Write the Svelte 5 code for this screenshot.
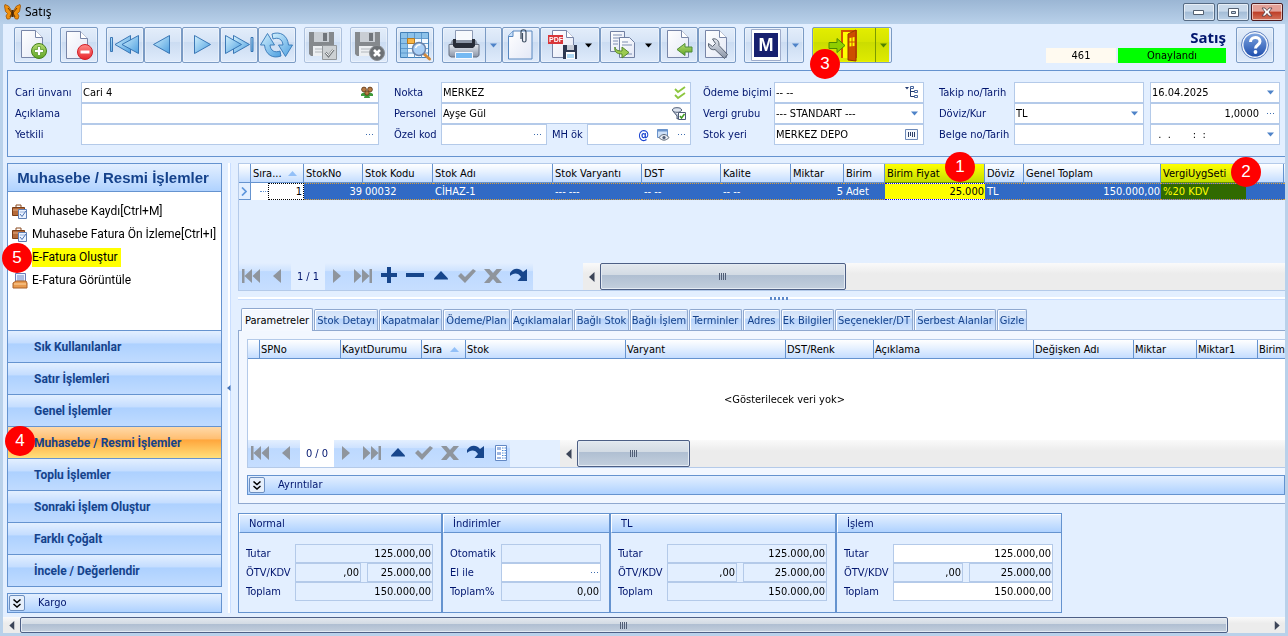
<script>
  const toolGroups = [
    [{ id: 'new', label: 'Yeni' }],
    [{ id: 'delete', label: 'Sil' }],
    [
      { id: 'first', label: 'İlk kayıt' },
      { id: 'prev', label: 'Önceki kayıt' },
      { id: 'next', label: 'Sonraki kayıt' },
      { id: 'last', label: 'Son kayıt' },
      { id: 'refresh', label: 'Yenile' }
    ],
    [{ id: 'save', label: 'Kaydet', off: true }],
    [{ id: 'cancel', label: 'Vazgeç', off: true }],
    [{ id: 'find', label: 'Listele' }],
    [
      { id: 'print', label: 'Yazdır', split: true, w: 60 },
      { id: 'attach', label: 'Ekler' },
      { id: 'pdf', label: 'PDF kaydet', w: 60 },
      { id: 'copy', label: 'Kopyala', w: 60 },
      { id: 'import', label: 'Aktar' },
      { id: 'tools', label: 'Araçlar' }
    ],
    [{ id: 'module', label: 'M', split: true, w: 60 }],
    [{ id: 'exit', label: 'Çıkış', split: true, w: 80, mark: '3' }]
  ];

  const sideLinks = [
    { text: 'Muhasebe Kaydı[Ctrl+M]', icon: 'case' },
    { text: 'Muhasebe Fatura Ön İzleme[Ctrl+I]', icon: 'case' },
    { text: 'E-Fatura Oluştur', icon: 'tray', hot: true },
    { text: 'E-Fatura Görüntüle', icon: 'tray' }
  ];
  const sections = [
    'Sık Kullanılanlar', 'Satır İşlemleri', 'Genel İşlemler', 'Muhasebe / Resmi İşlemler',
    'Toplu İşlemler', 'Sonraki İşlem Oluştur', 'Farklı Çoğalt', 'İncele / Değerlendir'
  ];

  const stockCols = [
    { t: 'Sıra...', w: 53, v: '1', sort: true, cls: 'seq' },
    { t: 'StokNo', w: 59, v: '39', cls: 'num' },
    { t: 'Stok Kodu', w: 70, v: '00032' },
    { t: 'Stok Adı', w: 120, v: 'CİHAZ-1' },
    { t: 'Stok Varyantı', w: 89, v: '--- ---' },
    { t: 'DST', w: 79, v: '-- --' },
    { t: 'Kalite', w: 70, v: '-- --' },
    { t: 'Miktar', w: 53, v: '5', cls: 'num' },
    { t: 'Birim', w: 41, v: 'Adet' },
    { t: 'Birim Fiyat', w: 100, v: '25.000', cls: 'num edit', hot: true, mark: '1' },
    { t: 'Döviz', w: 39, v: 'TL' },
    { t: 'Genel Toplam', w: 137, v: '150.000,00', cls: 'num' },
    { t: 'VergiUygSeti', w: 123, v: '%20 KDV', hot: true, mark: '2' }
  ];
  const paramCols = [
    ['SPNo', 81], ['KayıtDurumu', 81], ['Sıra', 44, true], ['Stok', 160], ['Varyant', 160], ['DST/Renk', 88],
    ['Açıklama', 160], ['Değişken Adı', 100], ['Miktar', 63], ['Miktar1', 61], ['Birim', 0]
  ];
  const tabs = [
    ['Stok Detayı', 64], ['Kapatmalar', 63], ['Ödeme/Plan', 67], ['Açıklamalar', 62], ['Bağlı Stok', 55],
    ['Bağlı İşlem', 58], ['Terminler', 53], ['Adres', 37], ['Ek Bilgiler', 53], ['Seçenekler/DT', 78],
    ['Serbest Alanlar', 82], ['Gizle', 30]
  ];
  const totals = [
    { t: 'Normal', w: 204, f: 138, v: 66 },
    { t: 'İndirimler', w: 168, f: 100, disc: true },
    { t: 'TL', w: 226, f: 160, v: 84 },
    { t: 'İşlem', w: 226, f: 160, v: 84, white: true }
  ];
  const nav1 = ['plus', 'minus', 'up', 'check', 'cross', 'redo'];
  const nav2 = ['up', 'check', 'cross', 'redo', 'cardview'];
</script>

{#snippet caret(dark)}
  <svg class="caret" width="7" height="5" viewBox="0 0 7 5"><path d="M0 0.5h7L3.5 4.5z" fill={dark ? '#000' : '#4f83c8'} /></svg>
{/snippet}

{#snippet dots()}
  <svg width="8" height="3" viewBox="0 0 8 3"><path d="M0 1h1v1H0zM3 1h1v1H3zM6 1h1v1H6z" fill="#3d6cae" /></svg>
{/snippet}

{#snippet page(x, y)}
  <path d="M{x} {y}h14l7 7v20h-21z" fill="url(#paper)" stroke="#7886a8" />
  <path d="M{x + 14} {y}v7h7" fill="#fff" stroke="#7886a8" />
{/snippet}

{#snippet toolIcon(id)}
  {#if id === 'new'}
    {@render page(7.5, 3.5)}
    <circle cx="25" cy="24" r="7.5" fill="url(#green)" stroke="#44801a" />
    <path d="M23.5 19.5h3v3h3v3h-3v3h-3v-3h-3v-3h3z" fill="#fff" stroke="#5a9a2b" stroke-width=".8" />
  {:else if id === 'delete'}
    {@render page(6.5, 4.5)}
    <circle cx="25" cy="25" r="7.5" fill="url(#red)" stroke="#d11f27" />
    <path d="M20.5 23.5h9v3h-9z" fill="#fff" />
  {:else if id === 'first'}
    <g fill="url(#sky)" stroke="#2c6cae" stroke-width=".9"><path d="M4.5 10.5h2v14h-2z" /><path d="M24.5 8.500v18L9 17.500z" /><path d="M32.500 8.500v18L16 17.500z" /></g>
  {:else if id === 'prev'}
    <path d="M25.500 8.500v18L9.500 17.500z" fill="url(#sky)" stroke="#2c6cae" stroke-width=".9" />
  {:else if id === 'next'}
    <path d="M12.500 8.500v18l16-9z" fill="url(#sky)" stroke="#2c6cae" stroke-width=".9" />
  {:else if id === 'last'}
    <g fill="url(#sky)" stroke="#2c6cae" stroke-width=".9"><path d="M31 10.500h2v14h-2z" /><path d="M13.500 8.500v18l16-9z" /><path d="M5.500 8.500v18l16-9z" /></g>
  {:else if id === 'refresh'}
    <g fill="url(#sky)" stroke="#3476b6" stroke-width=".9" stroke-linejoin="round">
      <path d="M14 7c8-3 15.500 1 16.500 11h4l-7 11.500-7-11.500h4.500c-.5-6-5-8-10-6z" />
      <path d="M23 29c-8 3-15.500-1-16.500-11h-4l7-11.500 7 11.500H12c.5 6 5 8 10 6z" />
    </g>
  {:else if id === 'save' || id === 'cancel'}
    <path d="M5 5h25v24H7l-2-2z" fill="#85898d" />
    <path d="M10 5h15v10H10z" fill="#c9ced4" /><path d="M19 6h4v8h-4z" fill="#70757b" />
    <path d="M9 19h16v10H9z" fill="#eceff2" /><path d="M11 22h12M11 25h12" stroke="#b2b7bc" />
    {#if id === 'save'}
      <path d="M18.500 18.500h14v14h-14z" fill="#cdd1d4" stroke="#93979b" />
      <path d="M21.500 25.500l3 3.500 5-6.500" fill="none" stroke="#777c80" stroke-width="2.400" /><path d="M21.500 25.500l3 3 5-6.500" fill="none" stroke="#f7f7f7" />
    {:else}
      <circle cx="27" cy="26" r="7.500" fill="#6d7175" stroke="#8c9094" /><path d="M24 23l6 6M30 23l-6 6" stroke="#fff" stroke-width="2.600" />
    {/if}
  {:else if id === 'find'}
    <path d="M4.500 5.500h28v25h-28z" fill="#f3f9ff" stroke="#4380b8" />
    <path d="M5 6h27v5H5zM5 11h6v19H5z" fill="#8cc2ea" />
    <path d="M11.500 6v25M18.500 6v25M25.500 6v25M5 11.500h27M5 16.500h27M5 21.500h27M5 26h27" stroke="#5893c8" stroke-width=".9" />
    <path d="M11.500 11.500h7v5h-7z" fill="#f9b646" stroke="#b57a20" />
    <path d="M28 27l5.500 5" stroke="#d28a3b" stroke-width="3" stroke-linecap="round" />
    <circle cx="23" cy="22" r="6.500" fill="#a9cff6" stroke="#6a82a8" stroke-width="1.500" /><path d="M19.500 21c1-3 4-3.500 5-3" stroke="#fff" stroke-width="1.500" fill="none" />
  {:else if id === 'print'}
    <path d="M13.500 3.500h17v13h-17z" fill="#f7f9fd" stroke="#8c9ab5" />
    <path d="M10 13h24l3 7H7z" fill="#8b95a6" />
    <path d="M7 17.500h30v11l-2 1.500H9l-2-1.500z" fill="url(#grey)" stroke="#646e80" />
    <path d="M11 12h3v4h16v-4h3v7l-2 2H13l-2-2z" fill="#272c38" />
    <path d="M13.500 25.500h17v6h-17z" fill="#74b9f3" stroke="#f6f9ff" />
  {:else if id === 'attach'}
    <path d="M11 4h19v28H6.500V9z" fill="url(#paper)" stroke="#5888c0" /><path d="M6.500 9.500H11V4" fill="#c5dffb" stroke="#5888c0" />
    <path d="M20.500 6v7.500c0 2 3.500 2 3.500 0V5c0-3-5-3-5 0v7" fill="none" stroke="#3e4f63" stroke-width="1.200" />
  {:else if id === 'pdf'}
    {@render page(12.500, 3.500)}
    <path d="M8 8h15v9H8z" fill="#d8363a" /><text x="9" y="15" class="pdf">PDF</text>
    <path d="M23 18h14v14H23z" fill="#2d3952" /><path d="M27 18h7v5h-7z" fill="#c6ccd8" /><path d="M26 25h9v7h-9z" fill="#fff" /><path d="M27 28h7M27 30h7" stroke="#5cb0e8" />
  {:else if id === 'copy'}
    <path d="M10.500 4.500h14v20h-14z" fill="url(#paper)" stroke="#7180a2" /><path d="M13 8h9M13 11h9M13 14h5M13 17h5" stroke="#7f8fb2" />
    <path d="M19.500 10.500h10l5 5v15h-15z" fill="url(#paper)" stroke="#7180a2" /><path d="M22 15h6M22 18h10M22 27h10" stroke="#7f8fb2" />
    <path d="M15 20c0 3 3 4 7 4v-4l7 5.500-7 5.500v-4c-5 0-8-2-7-7z" fill="#9ccb50" stroke="#55872b" />
  {:else if id === 'import'}
    {@render page(7.500, 3.500)}
    <path d="M17 22.500l8-6v3.500h7v5h-7v3.500z" fill="url(#green)" stroke="#4f8d36" />
  {:else if id === 'tools'}
    {@render page(7.500, 3.500)}
    <path d="M14.500 12c4-1 7 2 6.500 6.500l8.500 9-3 4-9.500-9c-4 1-7-2-6.500-6l4 3 3-3z" fill="url(#grey)" stroke="#56606f" />
  {:else if id === 'module'}
    <path d="M7.500 2.500h29v31h-29z" fill="#fff" stroke="#9eaccb" /><path d="M10 6h24v24H10z" fill="#17206f" />
  {:else if id === 'exit'}
    <path d="M30 31V4h14v27" fill="#fff" stroke="#d2551e" stroke-width="2" />
    <path d="M36 7l8-4v31l-8-1z" fill="#cd4d16" stroke="#963609" />
    <path d="M37.500 11l5-1v9l-5 .5z" fill="#fff" /><path d="M40 10v10M37 15h6" stroke="#cd4d16" />
    <path d="M17 15.500h8v-4l8 7-8 7v-4h-8z" fill="#8fce4a" stroke="#4c8a28" />
  {/if}
{/snippet}

{#snippet navIcon(id)}
  <svg width="22" height="22" viewBox="0 0 22 22">
    {#if id === 'first'}<path d="M2 4h2.500v14H2zM12 4v14L4.500 11zM20 4v14l-7.500-7z" fill="#8f959d" />
    {:else if id === 'prev'}<path d="M15 4v14L7 11z" fill="#8f959d" />
    {:else if id === 'next'}<path d="M7 4v14l8-7z" fill="#8f959d" />
    {:else if id === 'last'}<path d="M17.500 4H20v14h-2.500zM10 4v14l7.500-7zM2 4v14l7.500-7z" fill="#8f959d" />
    {:else if id === 'plus'}<path d="M9 2h4v6h6v4h-6v6H9v-6H3V8h6z" fill="#17468c" />
    {:else if id === 'minus'}<path d="M2 8h18v4H2z" fill="#17468c" />
    {:else if id === 'up'}<path d="M4 13.500v1h14v-1L11 6z" fill="#17468c" />
    {:else if id === 'check'}<path d="M2 11l3-3 4 4 8-8 3 2L9 18z" fill="#8f959d" />
    {:else if id === 'cross'}<path d="M2 4h5.500L11 8l3.500-4H20l-6 7 6 7h-5.500L11 14l-3.500 4H2l6-7z" fill="#8f959d" />
    {:else if id === 'redo'}<path d="M2 11V8c3-5 9-6 13-1l4-3v12H9.500l3.500-4C10 7 5 8 2 11z" fill="#17468c" />
    {:else}<path d="M5.500 3.500h11v15h-11z" fill="#fff" stroke="#6288c4" /><path d="M7 5h4v3H7zM7 10h4v3H7zM7 15h4v2H7z" fill="#9eb7e2" /><path d="M12 6h4M12 8.500h4M12 11h4M12 13.500h4M12 16h4" stroke="#4d8ad8" stroke-dasharray="1.500 1" />{/if}
  </svg>
{/snippet}

{#snippet navigator(count, extra, gapClass, thumb)}
  <div class="nav {gapClass}">
    <div class="navbtns">
      <button aria-label="İlk">{@render navIcon('first')}</button>
      <button aria-label="Önceki">{@render navIcon('prev')}</button>
      <span class="count">{count}</span>
      <button aria-label="Sonraki">{@render navIcon('next')}</button>
      <button aria-label="Son">{@render navIcon('last')}</button>
      {#each extra as e}<button aria-label={e} class:slim={e === 'cardview'}>{@render navIcon(e)}</button>{/each}
    </div>
    <div class="hbar">
      <button class="arr" aria-label="Sola kaydır"><svg width="6" height="10" viewBox="0 0 6 10"><path d="M5.500 0v10L0 5z" fill="#3c4558" /></svg></button>
      <div class="thumb" style:width="{thumb}px"><i class="grip"></i></div>
    </div>
  </div>
{/snippet}

{#snippet sortMark()}
  <svg class="sort" width="9" height="5" viewBox="0 0 9 5"><path d="M0 5h9L4.500 0z" fill="#93c0f8" /></svg>
{/snippet}

{#snippet chevrons()}
  <button class="chev" aria-label="Genişlet"><svg width="8" height="9" viewBox="0 0 8 9"><path d="M.5 0.500L4 3.500l3.500-3M.5 5L4 8l3.500-3" fill="none" stroke="#000" stroke-width="1.500" /></svg></button>
{/snippet}

<svg class="defs" width="0" height="0" aria-hidden="true">
  <defs>
    <linearGradient id="paper" x1="0" y1="0" x2="1" y2="1"><stop offset="0" stop-color="#fff" /><stop offset="1" stop-color="#e3e8f6" /></linearGradient>
    <linearGradient id="sky" x1="0" y1="0" x2="1" y2="1"><stop offset="0" stop-color="#d2f0fd" /><stop offset="1" stop-color="#4d9fe0" /></linearGradient>
    <linearGradient id="green" x1="0" y1="0" x2="0" y2="1"><stop offset="0" stop-color="#b7dc73" /><stop offset="1" stop-color="#5fa523" /></linearGradient>
    <linearGradient id="red" x1="0" y1="0" x2="0" y2="1"><stop offset="0" stop-color="#ff8a88" /><stop offset="1" stop-color="#e8262c" /></linearGradient>
    <linearGradient id="grey" x1="0" y1="0" x2="0" y2="1"><stop offset="0" stop-color="#e4e8ef" /><stop offset="1" stop-color="#8893a6" /></linearGradient>
    <linearGradient id="help" x1="0" y1="0" x2="0" y2="1"><stop offset="0" stop-color="#7fa5e0" /><stop offset="1" stop-color="#1f4fae" /></linearGradient>
  </defs>
</svg>

<div class="window">
  <header class="titlebar">
    <svg width="17" height="16" viewBox="0 0 17 16">
      <path d="M8 7.500L4.500 2 1 .5 .5 2l1 5.500 2 2L2 12l1 3h2.500L8 11zM9 7.500L12.500 2 16 .5l.5 1.500-1 5.500-2 2L15 12l-1 3h-2.500L9 11z" fill="#f0900c" stroke="#9a560c" stroke-width=".8" />
      <path d="M4 4l4 5-2 4M13 4L9 9l2 4" fill="none" stroke="#5a2e08" stroke-width=".9" /><path d="M7.500 6h2v7h-2z" fill="#4a2a08" />
    </svg>
    <span>Satış</span>
    <div class="winbtns">
      <button aria-label="Simge durumu"><svg width="12" height="5" viewBox="0 0 12 5"><path d="M.5.500h10v4H.5z" fill="#fff" stroke="#535f70" /></svg></button>
      <button aria-label="Önceki boyut"><svg width="11" height="9" viewBox="0 0 11 9"><path d="M.5.500h10v8H.5z" fill="#fff" stroke="#535f70" /><path d="M3.500 3.500h4v2h-4z" fill="#c2d3e6" stroke="#535f70" /></svg></button>
      <button class="close" aria-label="Kapat"><svg width="12" height="10" viewBox="0 0 12 10"><path d="M1 1h3l2 2.500L8 1h3L8 5l3 4H8L6 6.500 4 9H1l3-4z" fill="#fff" stroke="#503a40" stroke-width=".8" /></svg></button>
    </div>
  </header>

  <div class="client">
    <div class="toolbar">
      {#each toolGroups as group}
        <div class="tgroup">
          {#each group as b}
            <div class="tool" class:off={b.off} class:lit={b.id === 'exit'} style:width="{b.w ?? 38}px">
              <button class="face" aria-label={b.label} disabled={b.off}>
                <svg width="100%" height="34"><svg x="-1" y="-1" overflow="visible">{@render toolIcon(b.id)}</svg></svg>
                {#if b.id === 'module'}<b class="em">M</b>{/if}
                {#if b.id === 'pdf' || b.id === 'copy'}<span class="drop">{@render caret(true)}</span>{/if}
              </button>
              {#if b.split}<button class="more" aria-label="{b.label} seçenekleri">{@render caret(false)}</button>{/if}
              {#if b.mark}<i class="mark m3">{b.mark}</i>{/if}
            </div>
          {/each}
        </div>
      {/each}
      <div class="status">
        <h1>Satış</h1>
        <div class="chips"><span class="no">461</span><span class="ok">Onaylandı</span></div>
      </div>
      <div class="tool"><button class="face" aria-label="Yardım">
        <svg width="36" height="34" viewBox="0 0 36 34"><circle cx="18" cy="17" r="13.500" fill="#f4f7fd" stroke="#5b7fc0" /><circle cx="18" cy="17" r="11.500" fill="url(#help)" /><path d="M13.500 14c0-6 9.500-6 9.500-.5 0 3.500-4.500 3.500-4.500 7" fill="none" stroke="#fff" stroke-width="3" /><circle cx="18.500" cy="24" r="1.900" fill="#fff" /></svg>
      </button></div>
    </div>

    <form class="form">
      <label for="cari">Cari ünvanı</label>
      <div class="box"><input id="cari" value="Cari 4" />
        <svg width="14" height="13" viewBox="0 0 14 13"><path d="M1 8c2-2 4-2 6 0 2-2 4-2 6 0v2H1zM4 12c0-4 6-4 6 0z" fill="#3e9a3a" /><g fill="#b57a44" stroke="#5b3413" stroke-width=".8"><circle cx="4" cy="3.500" r="2.400" /><circle cx="10" cy="3.500" r="2.400" /><circle cx="7" cy="7" r="2.200" /></g></svg></div>
      <label for="nokta">Nokta</label>
      <div class="box"><input id="nokta" value="MERKEZ" />
        <svg width="12" height="14" viewBox="0 0 12 14"><path d="M1 3l3 3 7-5M1 9l3 3 7-5" fill="none" stroke="#8dc63f" stroke-width="1.800" /></svg></div>
      <label for="odeme">Ödeme biçimi</label>
      <div class="box"><input id="odeme" value="-- --" />
        <svg width="14" height="13" viewBox="0 0 14 13"><path d="M0 1h4L2 3.500z" fill="#223a70" /><path d="M5.500 2v8.500H9M5.500 5.500H9" fill="none" stroke="#223a70" /><path d="M5.500.500h3v2h-3zM9.500 4.500h3v2h-3zM9.500 9.500h3v2h-3z" fill="#fff" stroke="#47659c" /></svg></div>
      <label for="takip">Takip no/Tarih</label>
      <div class="box"><input id="takip" /></div>
      <div class="box last"><input aria-label="Tarih" value="16.04.2025" />{@render caret(false)}</div>

      <label for="aciklama">Açıklama</label>
      <div class="box"><input id="aciklama" /></div>
      <label for="personel">Personel</label>
      <div class="box"><input id="personel" value="Ayşe Gül" />
        <svg width="14" height="13" viewBox="0 0 14 13"><ellipse cx="5" cy="3" rx="4.500" ry="2.300" fill="#dfe5ef" stroke="#4c5a74" /><path d="M1 4l4 5v3l2-1V8" fill="#b9c3d4" stroke="#4c5a74" /><path d="M6.500 5.500h7v7h-7z" fill="#fff" stroke="#4c5a74" /><path d="M8 9l1.500 2 3-4" fill="none" stroke="#3f9b1c" stroke-width="1.500" /></svg></div>
      <label for="vergi">Vergi grubu</label>
      <div class="box"><select id="vergi"><option>--- STANDART ---</option></select>{@render caret(false)}</div>
      <label for="doviz">Döviz/Kur</label>
      <div class="box"><select id="doviz"><option>TL</option></select>{@render caret(false)}</div>
      <div class="box last num"><input aria-label="Kur" value="1,0000" />{@render dots()}</div>

      <label for="yetkili">Yetkili</label>
      <div class="box"><input id="yetkili" />{@render dots()}</div>
      <label for="ozel">Özel kod</label>
      <div class="pair">
        <div class="box"><input id="ozel" />{@render dots()}</div>
        <label for="mh">MH ök</label>
        <div class="box"><input id="mh" /><b class="at">@</b>
          <svg width="13" height="12" viewBox="0 0 13 12"><path d="M.5.500h10v8H.5z" fill="#cfe1f8" stroke="#6b94cc" /><path d="M.5.500h10v2H.5z" fill="#6b94cc" /><path d="M2 8.500c3-4 7-4 10 0-3 3.500-7 3.500-10 0z" fill="#e7ebf2" stroke="#5b6675" /><circle cx="7" cy="8.500" r="1.600" fill="#4c5a74" /></svg>
          {@render dots()}</div>
      </div>
      <label for="yer">Stok yeri</label>
      <div class="box"><input id="yer" value="MERKEZ DEPO" />
        <svg width="14" height="12" viewBox="0 0 14 12"><path d="M.5.500h12v10H.5z" fill="#f5f8fd" stroke="#6d89b8" /><path d="M3.500 3v5M5.500 3v4M7.500 3v5M9.500 3v5" stroke="#2c3e66" /></svg></div>
      <label for="belge">Belge no/Tarih</label>
      <div class="box"><input id="belge" /></div>
      <div class="box last"><input aria-label="Belge tarihi" value="  .  .       :  :" />{@render caret(false)}</div>
    </form>

    <div class="work">
      <aside>
        <div class="panel">
          <h2>Muhasebe / Resmi İşlemler</h2>
          <ul>
            {#each sideLinks as l}
              <li>
                <svg width="16" height="16" viewBox="0 0 16 16">
                  {#if l.icon === 'case'}
                    <path d="M4 3V1h5v2" fill="none" stroke="#8a4a20" /><path d="M.5 3.500h12v8H.5z" fill="#b56a3a" stroke="#7a3e18" /><path d="M1 6h11" stroke="#e6b088" />
                    <path d="M6.500 5.500h8v9h-8z" fill="#eaf2ff" stroke="#5f7fb4" /><path d="M8 8h5" stroke="#9bb4de" /><path d="M8 10l2 2.500L14 7" fill="none" stroke="#4b73b4" />
                  {:else}
                    <path d="M3.500.500h10v9h-10z" fill="#eef3ff" stroke="#6a7cb8" /><path d="M5 3h7M5 5h7M5 7h7" stroke="#6a86c8" />
                    <path d="M1 10l3-2h10l1 2v5H1z" fill="#e79a4e" stroke="#a8602a" /><path d="M2 11h12" stroke="#ffd6a4" />
                  {/if}
                </svg>
                <a href="#islem" class:hot={l.hot}>{l.text}</a>
                {#if l.hot}<i class="mark m5">5</i>{/if}
              </li>
            {/each}
          </ul>
          {#each sections as s, i}
            <button class="section" class:active={i === 3}>{s}{#if i === 3}<i class="mark m4">4</i>{/if}</button>
          {/each}
        </div>
        <div class="fold">{@render chevrons()}<span>Kargo</span></div>
      </aside>

      <div class="vsplit"><svg width="4" height="6" viewBox="0 0 4 6"><path d="M3.500 0v6L0 3z" fill="#4373b8" /></svg></div>

      <main>
        <section class="grid stock">
          <table>
            <colgroup><col style:width="12px" />{#each stockCols as c}<col style:width="{c.w}px" />{/each}<col /></colgroup>
            <thead><tr><th></th>
              {#each stockCols as c}<th class:lit={c.hot} class:part={c.mark === '2'}>{c.t}{#if c.sort}{@render sortMark()}{/if}{#if c.mark}<i class="mark m{c.mark}">{c.mark}</i>{/if}</th>{/each}
              <th></th></tr></thead>
            <tbody><tr><td class="ind"><svg width="6" height="9" viewBox="0 0 6 9"><path d="M1 .5l4 4-4 4" fill="none" stroke="#5e96dc" stroke-width="1.700" /></svg></td>
              {#each stockCols as c}<td class={c.cls} class:lit={c.hot} class:part={c.mark === '2'}>{#if c.sort}<span class="row"><i class="twig"></i><span class="one">{c.v}</span></span>{:else}{c.v}{/if}</td>{/each}
              <td></td></tr></tbody>
          </table>
          {@render navigator('1 / 1', nav1, 'wide', 246)}
        </section>

        <div class="hsplit"><i></i></div>

        <div class="tabs" role="tablist">
          <button role="tab" aria-selected="true" class="on">Parametreler</button>
          {#each tabs as [t, w]}<button role="tab" aria-selected="false" style:width="{w}px">{t}</button>{/each}
        </div>
        <div class="tabpage">
          <section class="grid params">
            <table>
              <colgroup><col style:width="12px" />{#each paramCols as c}{#if c[1]}<col style:width="{c[1]}px" />{:else}<col />{/if}{/each}</colgroup>
              <thead><tr><th></th>{#each paramCols as c}<th>{c[0]}{#if c[2]}{@render sortMark()}{/if}</th>{/each}</tr></thead>
            </table>
            <p>&lt;Gösterilecek veri yok&gt;</p>
            {@render navigator('0 / 0', nav2, 'white', 113)}
          </section>
          <div class="fold">{@render chevrons()}<span>Ayrıntılar</span></div>
        </div>

        <div class="totals">
          {#each totals as g, i}
            <fieldset style:width="{g.w}px">
              <h3>{g.t}</h3>
              <div class="lines" style="--f: {g.f}px; --v: {g.v ?? 0}px">
                {#if g.disc}
                  <label for="ot">Otomatik</label><div class="sum"><input id="ot" readonly /></div>
                  <label for="el">El ile</label><div class="sum white"><input id="el" />{@render dots()}</div>
                  <label for="tp">Toplam%</label><div class="sum"><input id="tp" value="0,00" readonly /></div>
                {:else}
                  <label for="tu{i}">Tutar</label><div class="sum" class:white={g.white}><input id="tu{i}" value="125.000,00" /></div>
                  <label for="ov{i}">ÖTV/KDV</label><div class="two"><div class="sum"><input id="ov{i}" value=",00" readonly /></div><div class="sum"><input aria-label="KDV" value="25.000,00" readonly /></div></div>
                  <label for="to{i}">Toplam</label><div class="sum" class:white={g.white}><input id="to{i}" value="150.000,00" /></div>
                {/if}
              </div>
            </fieldset>
          {/each}
        </div>
      </main>
    </div>

    <div class="hbar page">
      <button class="arr" aria-label="Sola"><svg width="6" height="9" viewBox="0 0 6 10"><path d="M5.500 0v10L0 5z" fill="#3c4558" /></svg></button>
      <div class="thumb"><i class="grip"></i></div>
      <button class="arr" aria-label="Sağa"><svg width="6" height="9" viewBox="0 0 6 10"><path d="M.5 0v10L6 5z" fill="#3c4558" /></svg></button>
    </div>
  </div>
</div>

<style>
  :global(body) { background: #b9d1ea; }
  * { box-sizing: border-box; }
  button, input, select { font: inherit; color: inherit; margin: 0; padding: 0; border: 0; background: none; border-radius: 0; outline: 0; }
  h1, h2, h3, ul, p, fieldset { margin: 0; padding: 0; border: 0; list-style: none; }
  a { color: inherit; text-decoration: none; }
  i { font-style: normal; }
  svg { display: block; flex: none; }
  .defs { position: absolute; }

  .window { min-height: 100vh; display: flex; flex-direction: column; padding: 0 3px 3px; overflow: hidden; background: #b9d1ea; font: 11px/14px "DejaVu Sans Condensed", "Noto Sans", sans-serif; color: #000; }
  .titlebar { display: flex; align-items: center; gap: 4px; height: 24px; margin: 0 -3px; padding: 0 5px 0 4px; background: linear-gradient(#9bb6d4, #b9d1ea); font: 12px/16px "Noto Sans", sans-serif; }
  .winbtns { display: flex; gap: 2px; margin-left: auto; }
  .winbtns button { width: 32px; height: 18px; display: grid; place-items: center; border: 1px solid #566b84; border-radius: 2px; box-shadow: inset 0 0 0 1px #ffffff90; background: linear-gradient(#c9d9ea 45%, #a3bcd6 50%, #bdd2e8); }
  .winbtns .close { border-color: #4d1a1e; background: linear-gradient(#e3a198 45%, #bd3d26 50%, #d4735c); }
  .client { flex: 1; display: flex; flex-direction: column; background: #e3efff; min-width: 0; }

  .toolbar { display: flex; gap: 8px; padding: 3px 11px 7px; height: 46px; }
  .tgroup { display: flex; }
  .tool { position: relative; display: flex; height: 36px; width: 38px; border: 1px solid #7b9bc4; border-radius: 2px; background: linear-gradient(#e3edfa, #d6e4f6 40%, #cbdcf2 42%, #dfebfb); box-shadow: inset 0 0 0 1px #ffffff60; }
  .tool.off { border-color: #adc1dd; }
  .face { flex: 1; position: relative; overflow: hidden; min-width: 0; }
  .more { width: 16px; display: grid; place-items: center; border-left: 1px solid #7b9bc4; }
  .drop { position: absolute; right: 7px; top: 15px; }
  .em { position: absolute; left: 9px; top: 5px; width: 24px; line-height: 24px; color: #fff; font-family: "Liberation Sans", sans-serif; font-size: 18px; text-align: center; }
  .pdf { font: bold 7px "Liberation Sans", sans-serif; fill: #fff; }
  .tool.lit::after { content: ""; position: absolute; inset: 0 2px 0 0; background: #ff0; mix-blend-mode: multiply; pointer-events: none; }
  .mark { position: absolute; z-index: 2; width: 30px; height: 30px; border-radius: 50%; background: #f00; color: #fff; font: 17px/30px "Liberation Sans", sans-serif; text-align: center; }
  .m3 { left: -3px; top: 21px; }
  .status { margin: 0 2px 0 auto; width: 180px; }
  .status h1 { height: 21px; font: bold 15px/20px "Noto Sans", sans-serif; color: #00156e; text-align: right; }
  .chips { display: flex; gap: 2px; text-align: center; line-height: 15px; }
  .no { flex: 0 0 70px; background: #fffaf0; }
  .ok { flex: 1; background: #0f0; }

  .form { display: grid; grid-template-columns: 66px 298fr 62px 250fr 83px 150fr 90px 130fr 136fr; grid-auto-rows: 21px; margin-left: 4px; padding: 11px 5px 11px 7px; border: 1px solid #6593cf; border-right: 0; color: #00156e; }
  .form label { line-height: 21px; padding-left: 15px; white-space: nowrap; }
  .form > label:nth-of-type(4n + 1) { padding-left: 0; }
  .form > label:nth-of-type(4n + 3) { padding-left: 12px; }
  .box { display: flex; align-items: center; min-width: 0; gap: 8px; padding: 0 4px 0 0; border: 1px solid #b4cae9; background: #fff; color: #000; }
  .box input, .box select { flex: 1; min-width: 0; width: 0; height: 18px; padding-left: 1px; appearance: none; white-space: pre; }
  .box.last { margin-left: 6px; }
  .box .caret { margin-right: 1px; }
  .num input { text-align: right; }
  .form > .pair { display: flex; }
  .pair .box:first-child { flex: 106; }
  .pair label { flex: 0 0 40px; padding-left: 5px; }
  .pair .box:last-child { flex: 104; }
  .at { color: #1a43d0; font-size: 12px; }

  .work { flex: 1; display: flex; padding: 6px 0 4px 4px; min-width: 0; }
  aside { flex: 0 0 215px; min-width: 0; display: flex; flex-direction: column; gap: 6px; }
  .panel { flex: 1; display: flex; flex-direction: column; border: 1px solid #6593cf; background: #fff; }
  h2 { height: 28px; padding-right: 3px; border-bottom: 1px solid #6593cf; background: linear-gradient(#e3efff, #afd2ff); color: #15428b; font: bold 15px/27px "Liberation Sans", sans-serif; text-align: center; }
  .panel ul { flex: 1; padding-top: 8px; font: 12px/17px Roboto, sans-serif; }
  li { position: relative; display: flex; align-items: center; gap: 4px; height: 23px; padding-left: 4px; white-space: nowrap; }
  li a { height: 19px; line-height: 18px; padding-right: 3px; }
  li a.hot { background: #ff0; }
  .m5 { left: -6px; top: -3px; }
  .m4 { left: -3px; top: -1px; }
  .section { position: relative; height: 32px; padding-left: 26px; text-align: left; border-top: 1px solid #6593cf; background: linear-gradient(#e3efff, #c4ddff 38%, #add1ff 42%, #c0dbff); color: #15428b; font: bold 12px/30px Roboto, sans-serif; }
  .section.active { background: linear-gradient(#ffd9a8, #ffbf73 38%, #ffa63c 42%, #ffe07c); }
  .fold { display: flex; align-items: center; height: 20px; padding-left: 1px; gap: 13px; border: 1px solid #6593cf; background: linear-gradient(#e3efff, #afd2ff); color: #00156e; }
  .chev { width: 16px; height: 16px; display: grid; place-items: center; border: 1px solid #6d8fbf; border-radius: 2px; background: #e6effb; }

  .vsplit { flex: 0 0 16px; display: flex; align-items: center; padding-left: 5px; background: linear-gradient(90deg, #0000 6px, #fff 6px 8px, #c9deff 8px 9px, #0000 9px); }
  main { flex: 1; min-width: 0; display: flex; flex-direction: column; }
  .grid { display: flex; flex-direction: column; border: 1px solid #b4cae9; border-right: 0; min-width: 0; }
  .stock { min-height: 128px; }
  table { width: 100%; table-layout: fixed; border-collapse: separate; border-spacing: 0; }
  th { position: relative; height: 19px; padding: 1px 2px 0; text-align: left; font-weight: normal; white-space: nowrap; background: linear-gradient(#fff, #e3efff 50%, #c4ddff); border-right: 1px solid #6593cf; border-bottom: 1px solid #6593cf; }
  th:last-child { border-right: 0; overflow: hidden; }
  .sort { position: absolute; right: 6px; top: 7px; }
  td { position: relative; height: 17px; padding: 0 2px; color: #fff; background: #316ac5; white-space: nowrap; line-height: 15px; border-top: 1px dotted #d8a040; border-bottom: 1px dotted #d8a040; }
  td.num { text-align: right; padding-right: 1px; }
  td.ind { background: #e3efff; border: solid #6593cf; border-width: 0 1px 1px 0; }
  td.seq { padding: 0; background: #fff; color: #000; border: 0; }
  .row { display: flex; align-items: center; }
  .twig { width: 8px; margin: 0 0 0 9px; border-top: 1px dotted #6593cf; }
  .one { flex: 1; height: 17px; padding-right: 1px; text-align: right; border: 1px dotted #000; }
  td.edit { background: #fff; color: #000; border-color: #00f; }
  th.lit::after, td.lit::after { content: ""; position: absolute; inset: 0; background: #ff0; mix-blend-mode: multiply; }
  th.lit::after { bottom: -1px; }
  th.part::after, td.part::after { right: 38px; }
  .m1 { left: 60px; top: -12px; }
  .m2 { left: 70px; top: -7px; }

  .nav { display: flex; margin-top: auto; height: 27px; }
  .navbtns { display: flex; background: linear-gradient(#e3efff, #cfe3ff 28%, #bdd9ff 32%, #c6deff); color: #00156e; }
  .navbtns button { width: 26px; padding: 0 2px 2px 0; display: grid; place-items: center; }
  .navbtns .slim { width: 20px; }
  .count { width: 34px; line-height: 28px; text-align: center; background: #e3efff; }
  .white .count { background: #fff; }
  .white { background: #e3efff; color: #000; }
  .hbar { flex: 1; display: flex; margin-left: 50px; background: linear-gradient(#fafafa, #ececec 40%); }
  .arr { flex: 0 0 17px; display: grid; place-items: center; }
  .thumb { display: grid; place-items: center; border: 1px solid #4d5f85; border-radius: 2px; box-shadow: inset 0 0 0 1px #e4ebf3; background: linear-gradient(#e3e8ee, #d3dbe4 42%, #b0bfd2 46%, #c3cfdd); }
  .grip { width: 8px; height: 7px; background: repeating-linear-gradient(90deg, #505d75 0 1px, #0000 1px 2px); }
  .page { flex: 0 0 16px; margin-left: 0; }
  .page .thumb { flex: 1; margin-right: 40px; }

  .hsplit { height: 4px; margin: 6px 0 7px; display: grid; justify-items: center; background: linear-gradient(#fff 0 2px, #c9deff 2px 3px, #0000 3px); }
  .hsplit i { width: 19px; height: 3px; margin-left: 36px; background: repeating-linear-gradient(90deg, #5c88c8 0 2px, #0000 2px 4px); }
  .tabs { display: flex; align-items: flex-end; gap: 1px; height: 23px; padding-left: 3px; margin-bottom: -1px; }
  .tabs button { flex: none; position: relative; height: 21px; margin-bottom: 1px; padding-top: 2px; display: flex; justify-content: center; align-items: center; border: 1px solid #8fa8cf; border-bottom: 0; border-radius: 2px 2px 0 0; background: linear-gradient(#cfe0f8, #dce9fb 40%, #b6d3fb 45%, #cfe2fc); box-shadow: inset 1px 1px 0 #fff; color: #15428b; white-space: nowrap; }
  .tabs button.on { width: 72px; height: 23px; margin: 0; background: #f4f8ff; color: #000; z-index: 1; }
  .tabpage { flex: 1; display: flex; flex-direction: column; gap: 7px; padding: 8px 0 8px 8px; border: 1px solid #8fa8cf; border-right: 0; background: #f2f7ff; }
  .params { flex: 1; background: #fff; }
  .params th { padding: 1px 0 0 1px; }
  .params p { margin: auto; padding-left: 36px; }
  .tabpage .nav { margin: 0; }

  .totals { display: flex; margin-top: 9px; }
  fieldset { border: 1px solid #6593cf; min-width: 0; color: #00156e; }
  h3 { height: 19px; padding-left: 9px; font: inherit; line-height: 17px; border-bottom: 1px solid #6593cf; border-left: 1px solid #fff; border-top: 1px solid #fff; background: linear-gradient(#e3efff, #afd2ff); }
  .lines { display: grid; grid-template-columns: 1fr var(--f); grid-auto-rows: 19px; padding: 11px 8px 11px 7px; line-height: 19px; }
  .sum { display: flex; align-items: center; gap: 4px; min-width: 0; flex: 1; padding-right: 1px; border: 1px solid #b4cae9; color: #000; }
  .sum.white { background: #fff; }
  .sum input { flex: 1; width: 0; min-width: 0; text-align: right; }
  .two { display: flex; gap: 6px; min-width: 0; }
  .two .sum:last-child { flex: 0 0 var(--v); }
</style>
